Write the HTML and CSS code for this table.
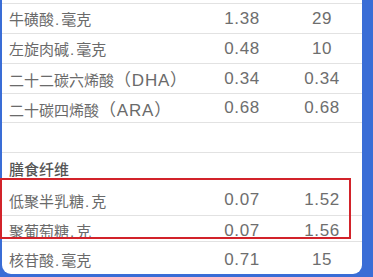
FILE: index.html
```html
<!DOCTYPE html>
<html lang="zh-CN">
<head>
<meta charset="utf-8">
<link rel="stylesheet" href="styles.css">
</head>
<body>
<div class="panel">
  <div class="table">
    <div class="row r-std"><span class="name">牛磺酸<span class="dot">.</span>毫克</span><span class="val">1.38</span><span class="val">29</span></div>
    <div class="row r-std"><span class="name">左旋肉碱<span class="dot">.</span>毫克</span><span class="val">0.48</span><span class="val">10</span></div>
    <div class="row r-std"><span class="name">二十二碳六烯酸<span class="lat">（DHA）</span></span><span class="val">0.34</span><span class="val">0.34</span></div>
    <div class="row r-short"><span class="name">二十碳四烯酸<span class="lat">（ARA）</span></span><span class="val">0.68</span><span class="val">0.68</span></div>
    <div class="row r-std"></div>
    <div class="row r-head"><span class="name head">膳食纤维</span></div>
    <div class="row r-gos"><span class="name">低聚半乳糖<span class="dot">.</span>克</span><span class="val">0.07</span><span class="val">1.52</span></div>
    <div class="row r-pd"><span class="name">聚葡萄糖<span class="dot">.</span>克</span><span class="val">0.07</span><span class="val">1.56</span></div>
    <div class="row r-last"><span class="name">核苷酸<span class="dot">.</span>毫克</span><span class="val">0.71</span><span class="val">15</span></div>
  </div>
  <div class="highlight"></div>
</div>
</body>
</html>
```
FILE: styles.css
```css
html, body {
  margin: 0;
  padding: 0;
}
body {
  background: #3a6dd6;
  width: 373px;
  height: 277px;
  overflow: hidden;
}
.panel {
  position: relative;
  margin-left: 2px;
  width: 360px;
  height: 274px;
  background: #fff;
  border-radius: 0 0 9px 9px;
  padding-top: 3px;
  box-sizing: border-box;
}
.table {
  display: flex;
  flex-direction: column;
}
.row {
  display: grid;
  grid-template-columns: 1fr 80px 80px;
  align-items: center;
  border-top: 1px solid #e2e2e2;
  box-sizing: border-box;
}
.r-std { height: 30px; }
.r-short { height: 29px; }
.r-head { height: 27px; align-items: end; }
.r-head .name { line-height: 18px; }
.r-gos { height: 36px; border-top: none; padding-top: 6px; }
.r-pd { height: 26px; padding-top: 4px; }
.r-last { height: 32px; padding-top: 4px; }
.name {
  padding-left: 7px;
  font-family: "Liberation Sans", "Noto Sans CJK SC", sans-serif;
  font-size: 15px;
  color: #6a6a6a;
  white-space: nowrap;
}
.dot {
  padding: 0 2px 0 1px;
}
.lat {
  font-size: 17px;
  letter-spacing: 0.8px;
}
.head {
  color: #555;
  font-weight: 500;
}
.val {
  text-align: center;
  font-family: "Liberation Sans", sans-serif;
  font-size: 17px;
  letter-spacing: 0.6px;
  color: #6e6e6e;
}
.highlight {
  position: absolute;
  left: -2px;
  top: 178px;
  width: 351px;
  height: 61px;
  border: 2px solid #d2232a;
  box-sizing: border-box;
}
```
